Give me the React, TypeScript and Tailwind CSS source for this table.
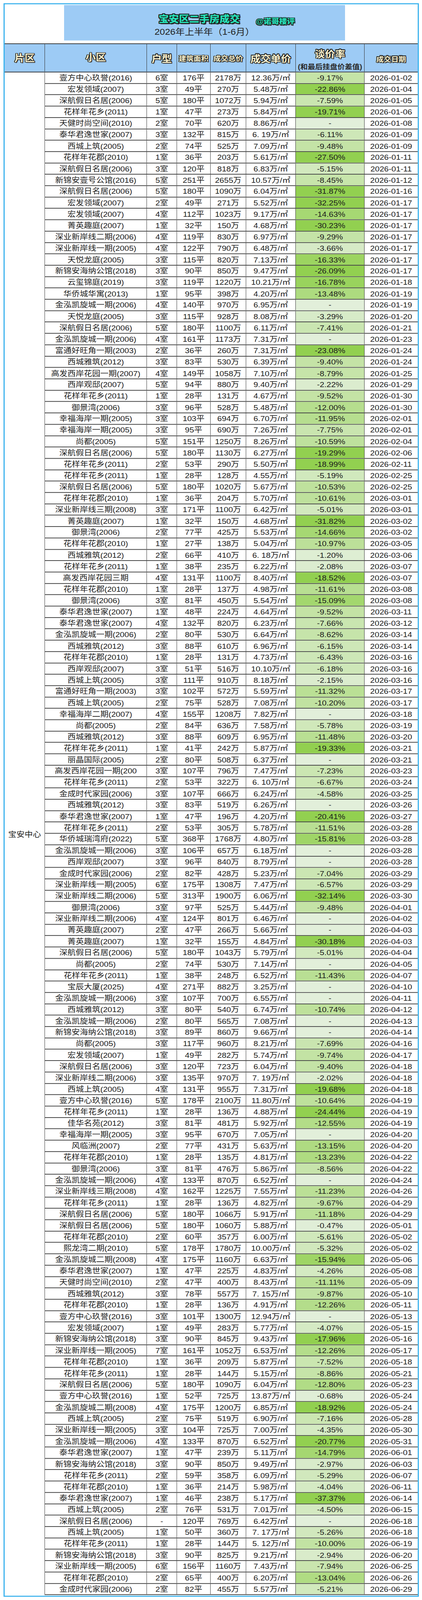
import React, { useEffect, useState } from "react";

const RAW = `壹方中心玖誉(2016)|6室|176|2178|12.36|-9.17|01-02
宏发领域(2007)|3室|49|270|5.48|-22.86|01-04
深航假日名居(2006)|5室|180|1072|5.94|-7.59|01-05
花样年花乡(2011)|1室|47|273|5.84|-19.71|01-06
天健时尚空间(2010)|2室|70|620|8.86|-|01-08
泰华君逸世家(2007)|3室|132|815|6. 19|-6.11|01-09
西城上筑(2005)|2室|74|525|7.09|-9.48|01-09
花样年花郡(2010)|1室|36|203|5.61|-27.50|01-11
深航假日名居(2006)|3室|120|818|6.83|-5.15|01-11
新锦安壹号公馆(2016)|5室|251|2655|10.57|-8.45|01-12
深航假日名居(2006)|5室|180|1090|6.04|-31.87|01-16
宏发领域(2007)|2室|49|271|5.52|-32.25|01-17
宏发领域(2007)|4室|112|1023|9.17|-14.63|01-17
菁英趣庭(2007)|1室|32|150|4.68|-30.23|01-17
深业新岸线二期(2006)|4室|119|830|6.97|-9.29|01-17
深业新岸线一期(2005)|4室|122|790|6.48|-3.66|01-17
天悦龙庭(2005)|3室|115|820|7.13|-16.33|01-17
新锦安海纳公馆(2018)|3室|90|850|9.47|-26.09|01-17
云玺锦庭(2019)|3室|119|1220|10.21|-16.78|01-18
华侨城华寓(2013)|1室|95|398|4.20|-13.48|01-19
金泓凯旋城一期(2006)|4室|140|970|6.95|-|01-19
天悦龙庭(2005)|3室|115|928|8.08|-3.29|01-20
深航假日名居(2006)|5室|180|1100|6.11|-7.41|01-21
金泓凯旋城一期(2006)|4室|161|1173|7.31|-|01-23
富通好旺角一期(2003)|2室|36|260|7.31|-23.08|01-24
西城雅筑(2012)|3室|83|530|6.39|-9.40|01-24
高发西岸花园一期(2007)|4室|149|1058|7.10|-8.79|01-25
西岸观邸(2007)|5室|94|880|9.40|-2.22|01-29
花样年花乡(2011)|1室|28|131|4.67|-9.52|01-30
御景湾(2006)|3室|96|528|5.48|-12.00|01-30
幸福海岸一期(2005)|3室|103|694|6.70|-11.95|02-01
幸福海岸一期(2005)|3室|95|690|7.26|-7.75|02-01
尚都(2005)|5室|151|1250|8.26|-10.59|02-04
深航假日名居(2006)|5室|180|1130|6.27|-19.29|02-06
花样年花乡(2011)|2室|53|290|5.50|-18.99|02-11
花样年花乡(2011)|1室|28|128|4.55|-5.19|02-25
深航假日名居(2006)|5室|180|1020|5.67|-10.53|02-25
花样年花郡(2010)|1室|36|204|5.70|-10.61|03-01
深业新岸线三期(2008)|3室|171|1100|6.42|-5.01|03-01
菁英趣庭(2007)|1室|32|150|4.68|-31.82|03-02
御景湾(2006)|2室|77|425|5.53|-14.66|03-02
花样年花郡(2010)|1室|27|138|5.04|-10.97|03-05
西城雅筑(2012)|2室|66|410|6. 18|-1.20|03-06
花样年花乡(2011)|1室|38|235|6.22|-2.08|03-07
高发西岸花园三期|4室|131|1100|8.40|-18.52|03-07
花样年花郡(2010)|1室|28|137|4.98|-11.61|03-08
御景湾(2006)|3室|81|450|5.54|-15.09|03-08
泰华君逸世家(2007)|1室|48|224|4.64|-9.52|03-11
泰华君逸世家(2007)|4室|132|820|6.23|-7.66|03-12
金泓凯旋城一期(2006)|2室|80|530|6.64|-8.62|03-14
西城雅筑(2012)|3室|88|610|6.96|-6.15|03-14
花样年花郡(2010)|1室|28|131|4.73|-6.43|03-16
西岸观邸(2007)|3室|51|516|10.10|-6.18|03-16
西城上筑(2005)|3室|111|910|8.18|-2.15|03-16
富通好旺角一期(2003)|3室|102|572|5.59|-11.32|03-17
西城上筑(2005)|2室|75|528|7.08|-10.20|03-17
幸福海岸二期(2007)|4室|155|1208|7.82|-|03-18
尚都(2005)|2室|84|636|7.58|-5.78|03-19
西城雅筑(2012)|3室|88|609|6.95|-11.48|03-20
花样年花乡(2011)|1室|41|242|5.87|-19.33|03-21
丽晶国际(2005)|2室|80|508|6.37|-|03-21
高发西岸花园一期(200|3室|107|796|7.47|-7.23|03-23
花样年花乡(2011)|2室|53|322|6. 10|-6.67|03-24
金成时代家园(2006)|3室|107|666|6.24|-4.58|03-25
西城雅筑(2012)|3室|83|519|6.26|-|03-26
泰华君逸世家(2007)|1室|47|196|4.20|-20.41|03-27
花样年花乡(2011)|2室|53|305|5.78|-11.51|03-28
华侨城瑞湾府(2022)|5室|368|1768|4.80|-15.81|03-28
金泓凯旋城一期(2006)|3室|106|657|6.18|-|03-28
西岸观邸(2007)|3室|96|840|8.79|-|03-28
金成时代家园(2006)|2室|82|428|5.23|-7.04|03-29
深业新岸线一期(2005)|6室|175|1308|7.47|-6.57|03-29
深业新岸线二期(2006)|5室|313|1900|6.06|-32.14|03-30
御景湾(2006)|3室|97|525|5.44|-9.48|04-01
深业新岸线二期(2006)|4室|124|801|6.46|-|04-02
菁英趣庭(2007)|2室|47|266|5.66|-|04-03
菁英趣庭(2007)|1室|32|155|4.84|-30.18|04-03
深航假日名居(2006)|5室|180|1043|5.79|-5.01|04-04
尚都(2005)|2室|74|530|7.14|-|04-05
花样年花乡(2011)|1室|38|248|6.52|-11.43|04-07
宝辰大厦(2025)|4室|271|882|3.25|-|04-10
金泓凯旋城一期(2006)|3室|107|700|6.55|-|04-11
西城雅筑(2012)|3室|80|540|6.74|-10.74|04-12
金泓凯旋城一期(2006)|2室|80|565|7.08|-|04-13
新锦安海纳公馆(2018)|3室|89|860|9.66|-|04-14
尚都(2005)|3室|117|960|8.21|-7.69|04-16
宏发领域(2007)|1室|49|282|5.74|-9.74|04-17
深航假日名居(2006)|3室|120|723|6.04|-9.40|04-18
深业新岸线二期(2006)|3室|135|970|7. 19|-2.02|04-18
西城上筑(2005)|4室|131|955|7.31|-19.68|04-18
壹方中心玖誉(2016)|5室|178|2100|11.80|-10.64|04-19
花样年花乡(2011)|1室|28|136|4.88|-24.44|04-19
佳华名苑(2012)|3室|81|481|5.92|-12.55|04-19
幸福海岸一期(2005)|3室|95|670|7.05|-|04-20
风临洲(2007)|2室|77|431|5.63|-13.15|04-20
花样年花郡(2010)|1室|28|135|4.81|-13.23|04-22
御景湾(2006)|3室|81|476|5.86|-8.56|04-22
金泓凯旋城一期(2006)|4室|133|870|6.52|-|04-24
深业新岸线三期(2008)|4室|162|1225|7.55|-11.23|04-26
花样年花乡(2011)|1室|28|136|4.82|-9.67|04-29
深航假日名居(2006)|5室|180|1066|5.91|-11.18|04-29
深航假日名居(2006)|5室|180|1060|5.88|-0.47|05-01
花样年花郡(2010)|2室|60|357|6.00|-5.61|05-02
熙龙湾二期(2010)|5室|178|1780|10.00|-5.32|05-02
金泓凯旋城二期(2008)|4室|175|1160|6.63|-15.94|05-06
泰华君逸世家(2007)|1室|47|225|4.83|-4.26|05-08
天健时尚空间(2010)|2室|47|400|8.43|-11.11|05-09
西城雅筑(2012)|3室|78|557|7. 15|-9.87|05-10
花样年花郡(2010)|1室|28|136|4.91|-12.26|05-11
壹方中心玖誉(2016)|3室|101|1300|12.94|-|05-13
宏发领域(2007)|1室|49|283|5.77|-4.07|05-15
新锦安海纳公馆(2018)|3室|90|845|9.43|-17.96|05-16
深业新岸线一期(2005)|7室|161|1052|6.53|-12.26|05-17
花样年花郡(2010)|1室|36|209|5.87|-7.52|05-18
花样年花乡(2011)|1室|28|144|5.15|-8.86|05-21
深航假日名居(2006)|5室|180|1090|6.04|-12.80|05-23
壹方中心玖誉(2016)|1室|52|725|13.87|-0.68|05-24
金泓凯旋城二期(2008)|4室|175|1200|6.85|-18.92|05-24
西城上筑(2005)|2室|75|519|6.90|-7.16|05-28
深业新岸线一期(2005)|3室|104|725|7.00|-4.35|05-30
金泓凯旋城一期(2006)|4室|133|870|6.52|-20.77|05-31
泰华君逸世家(2007)|1室|47|239|5.11|-14.79|06-01
新锦安海纳公馆(2018)|3室|90|850|9.49|-2.97|06-03
花样年花乡(2011)|2室|59|358|6.09|-5.29|06-07
花样年花郡(2010)|1室|36|214|5.98|-4.04|06-11
泰华君逸世家(2007)|1室|46|238|5.17|-37.37|06-14
西城上筑(2005)|2室|76|531|7.01|-4.50|06-15
深航假日名居(2006)|-|120|769|6.42|-|06-18
西城上筑(2005)|1室|50|360|7. 17|-5.26|06-18
花样年花乡(2011)|1室|28|144|5. 12|-10.00|06-19
新锦安海纳公馆(2018)|3室|90|825|9.21|-2.94|06-20
深业新岸线一期(2005)|6室|156|1160|7.43|-7.94|06-25
花样年花郡(2010)|2室|65|400|6.20|-13.04|06-26
金成时代家园(2006)|2室|82|455|5.57|-5.21|06-29`;

type Row = {
  name: string;
  room: string;
  area: string;
  total: string;
  unit: string;
  rate: string;
  date: string;
};

const ROWS: Row[] = RAW.split("\n").map((line) => {
  const [name, room, area, total, unit, rate, date] = line.split("|");
  return { name, room, area, total, unit, rate, date };
});

const PAGE_H = 4464;

function rateColor(rate: string): string {
  const light = [226, 239, 218];
  const dark = [146, 208, 80];
  if (rate === "-") return `rgb(${light[0]},${light[1]},${light[2]})`;
  const v = Math.abs(parseFloat(rate));
  let t = v <= 10 ? (v / 10) * 0.4 : 0.4 + ((v - 10) / 8) * 0.6;
  t = Math.max(0, Math.min(1, t));
  const c = light.map((l, i) => Math.round(l + (dark[i] - l) * t));
  return `rgb(${c[0]},${c[1]},${c[2]})`;
}

const OUTLINE =
  "[text-shadow:-1.5px_-1.5px_0_#1c1c1c,1.5px_-1.5px_0_#1c1c1c,-1.5px_1.5px_0_#1c1c1c,1.5px_1.5px_0_#1c1c1c,0_1.5px_0_#1c1c1c,0_-1.5px_0_#1c1c1c,1.5px_0_0_#1c1c1c,-1.5px_0_0_#1c1c1c,2px_2.5px_1px_#555]";

const TITLE_OUTLINE =
  "[text-shadow:-2px_-2px_0_#1a1a1a,2px_-2px_0_#1a1a1a,-2px_2px_0_#1a1a1a,2px_2px_0_#1a1a1a,0_2px_0_#1a1a1a,0_-2px_0_#1a1a1a,2px_0_0_#1a1a1a,-2px_0_0_#1a1a1a,3px_3px_1px_#444]";

const HCELL =
  "flex items-center justify-center border-l-[1.5px] border-[#333333] overflow-hidden";

const CELL =
  "flex items-center justify-center border-l-[1.5px] border-[#3a3a3a] whitespace-nowrap overflow-hidden leading-[21px]";

function HeaderText({ children, size }: { children: React.ReactNode; size: string }) {
  return (
    <span className={`${OUTLINE} ${size} font-bold leading-none text-[#fff6d2] whitespace-nowrap`}>
      {children}
    </span>
  );
}

function useFitScale(): number {
  const calc = () =>
    typeof window === "undefined" ? 1 : Math.min(1, window.innerHeight / PAGE_H);
  const [scale, setScale] = useState<number>(calc);
  useEffect(() => {
    const onResize = () => setScale(calc());
    window.addEventListener("resize", onResize);
    return () => window.removeEventListener("resize", onResize);
  }, []);
  return scale;
}

export default function App() {
  const scale = useFitScale();
  return (
    <div className="w-[1080px] overflow-hidden bg-white" style={{ height: PAGE_H * scale }}>
      <div
        className="w-[1080px] h-[4464px] bg-white pt-[9px] pl-[9px] font-['Liberation_Sans','Noto_Sans_CJK_SC',sans-serif] text-[#1c1c1c]"
        style={{ transform: `scaleY(${scale})`, transformOrigin: "top left" }}
      >
        <div className="w-[1063px] border-[3px] border-[#3eb4ee] bg-white">
          {/* Title area */}
          <div className="h-[109px] pt-[2px] overflow-hidden">
            <div className="ml-[152px] w-[719px] h-[99px] bg-[#9dcbf5] flex flex-col overflow-hidden">
              <div className="h-[53px] shrink-0 flex items-end pl-[242px] pb-[1px]">
                <span className={`${TITLE_OUTLINE} text-[26px] font-black leading-none text-[#27e0b8]`}>
                  宝安区二手房成交
                </span>
                <span className={`${OUTLINE} ml-[41px] mb-[-4px] text-[20px] font-black leading-none text-[#27e0b8]`}>
                  @诺哥楼评
                </span>
              </div>
              <div className="mt-[10px] flex justify-center">
                <span className="text-[24px] leading-none text-[#222222]">2026年上半年（1-6月）</span>
              </div>
            </div>
          </div>

          {/* Header row */}
          <div className="flex h-[81px] overflow-hidden border-y-2 border-[#333333] bg-[#9dcbf5]">
            <div className="w-[102px] flex items-center justify-center">
              <HeaderText size="text-[26px]">片区</HeaderText>
            </div>
            <div className={`${HCELL} w-[261px] pb-[4px]`}>
              <HeaderText size="text-[26px]">小区</HeaderText>
            </div>
            <div className={`${HCELL} w-[77px] pt-[4px]`}>
              <HeaderText size="text-[26px]">户型</HeaderText>
            </div>
            <div className={`${HCELL} w-[86px] pt-[4px]`}>
              <HeaderText size="text-[19px]">建筑面积</HeaderText>
            </div>
            <div className={`${HCELL} w-[91px] pt-[4px]`}>
              <HeaderText size="text-[19px]">成交总价</HeaderText>
            </div>
            <div className={`${HCELL} w-[127px] pt-[4px]`}>
              <HeaderText size="text-[26px]">成交单价</HeaderText>
            </div>
            <div className={`${HCELL} w-[176px] flex-col gap-[13px] pt-[10px]`}>
              <HeaderText size="text-[26px]">谈价率</HeaderText>
              <span className="text-[19px] font-bold leading-none text-[#2a2a2a] whitespace-nowrap">
                (和最后挂盘价差值)
              </span>
            </div>
            <div className={`${HCELL} w-[137px] pt-[8px]`}>
              <HeaderText size="text-[19px]">成交日期</HeaderText>
            </div>
          </div>

          {/* Body */}
          <div className="flex h-[4250px] overflow-hidden">
            <div className="w-[102px] shrink-0 flex items-center justify-center">
              <span className="text-[21px] leading-none">宝安中心</span>
            </div>
            <div className="flex flex-col">
              {ROWS.map((r, i) => (
                <div
                  key={i}
                  className="flex h-[31.716px] min-h-0 shrink-0 overflow-hidden border-b-2 border-[#3a3a3a] text-[21px]"
                >
                  <div className={`${CELL} w-[261px]`}>{r.name}</div>
                  <div className={`${CELL} w-[77px]`}>{r.room}</div>
                  <div className={`${CELL} w-[86px]`}>{r.area === "-" ? "-" : `${r.area}平`}</div>
                  <div className={`${CELL} w-[91px]`}>{`${r.total}万`}</div>
                  <div className={`${CELL} w-[127px]`}>{`${r.unit}万/㎡`}</div>
                  <div className={`${CELL} w-[176px]`} style={{ backgroundColor: rateColor(r.rate) }}>
                    {r.rate === "-" ? "-" : `${r.rate}%`}
                  </div>
                  <div className={`${CELL} w-[137px]`}>{`2026-${r.date}`}</div>
                </div>
              ))}
            </div>
          </div>
        </div>
      </div>
    </div>
  );
}
